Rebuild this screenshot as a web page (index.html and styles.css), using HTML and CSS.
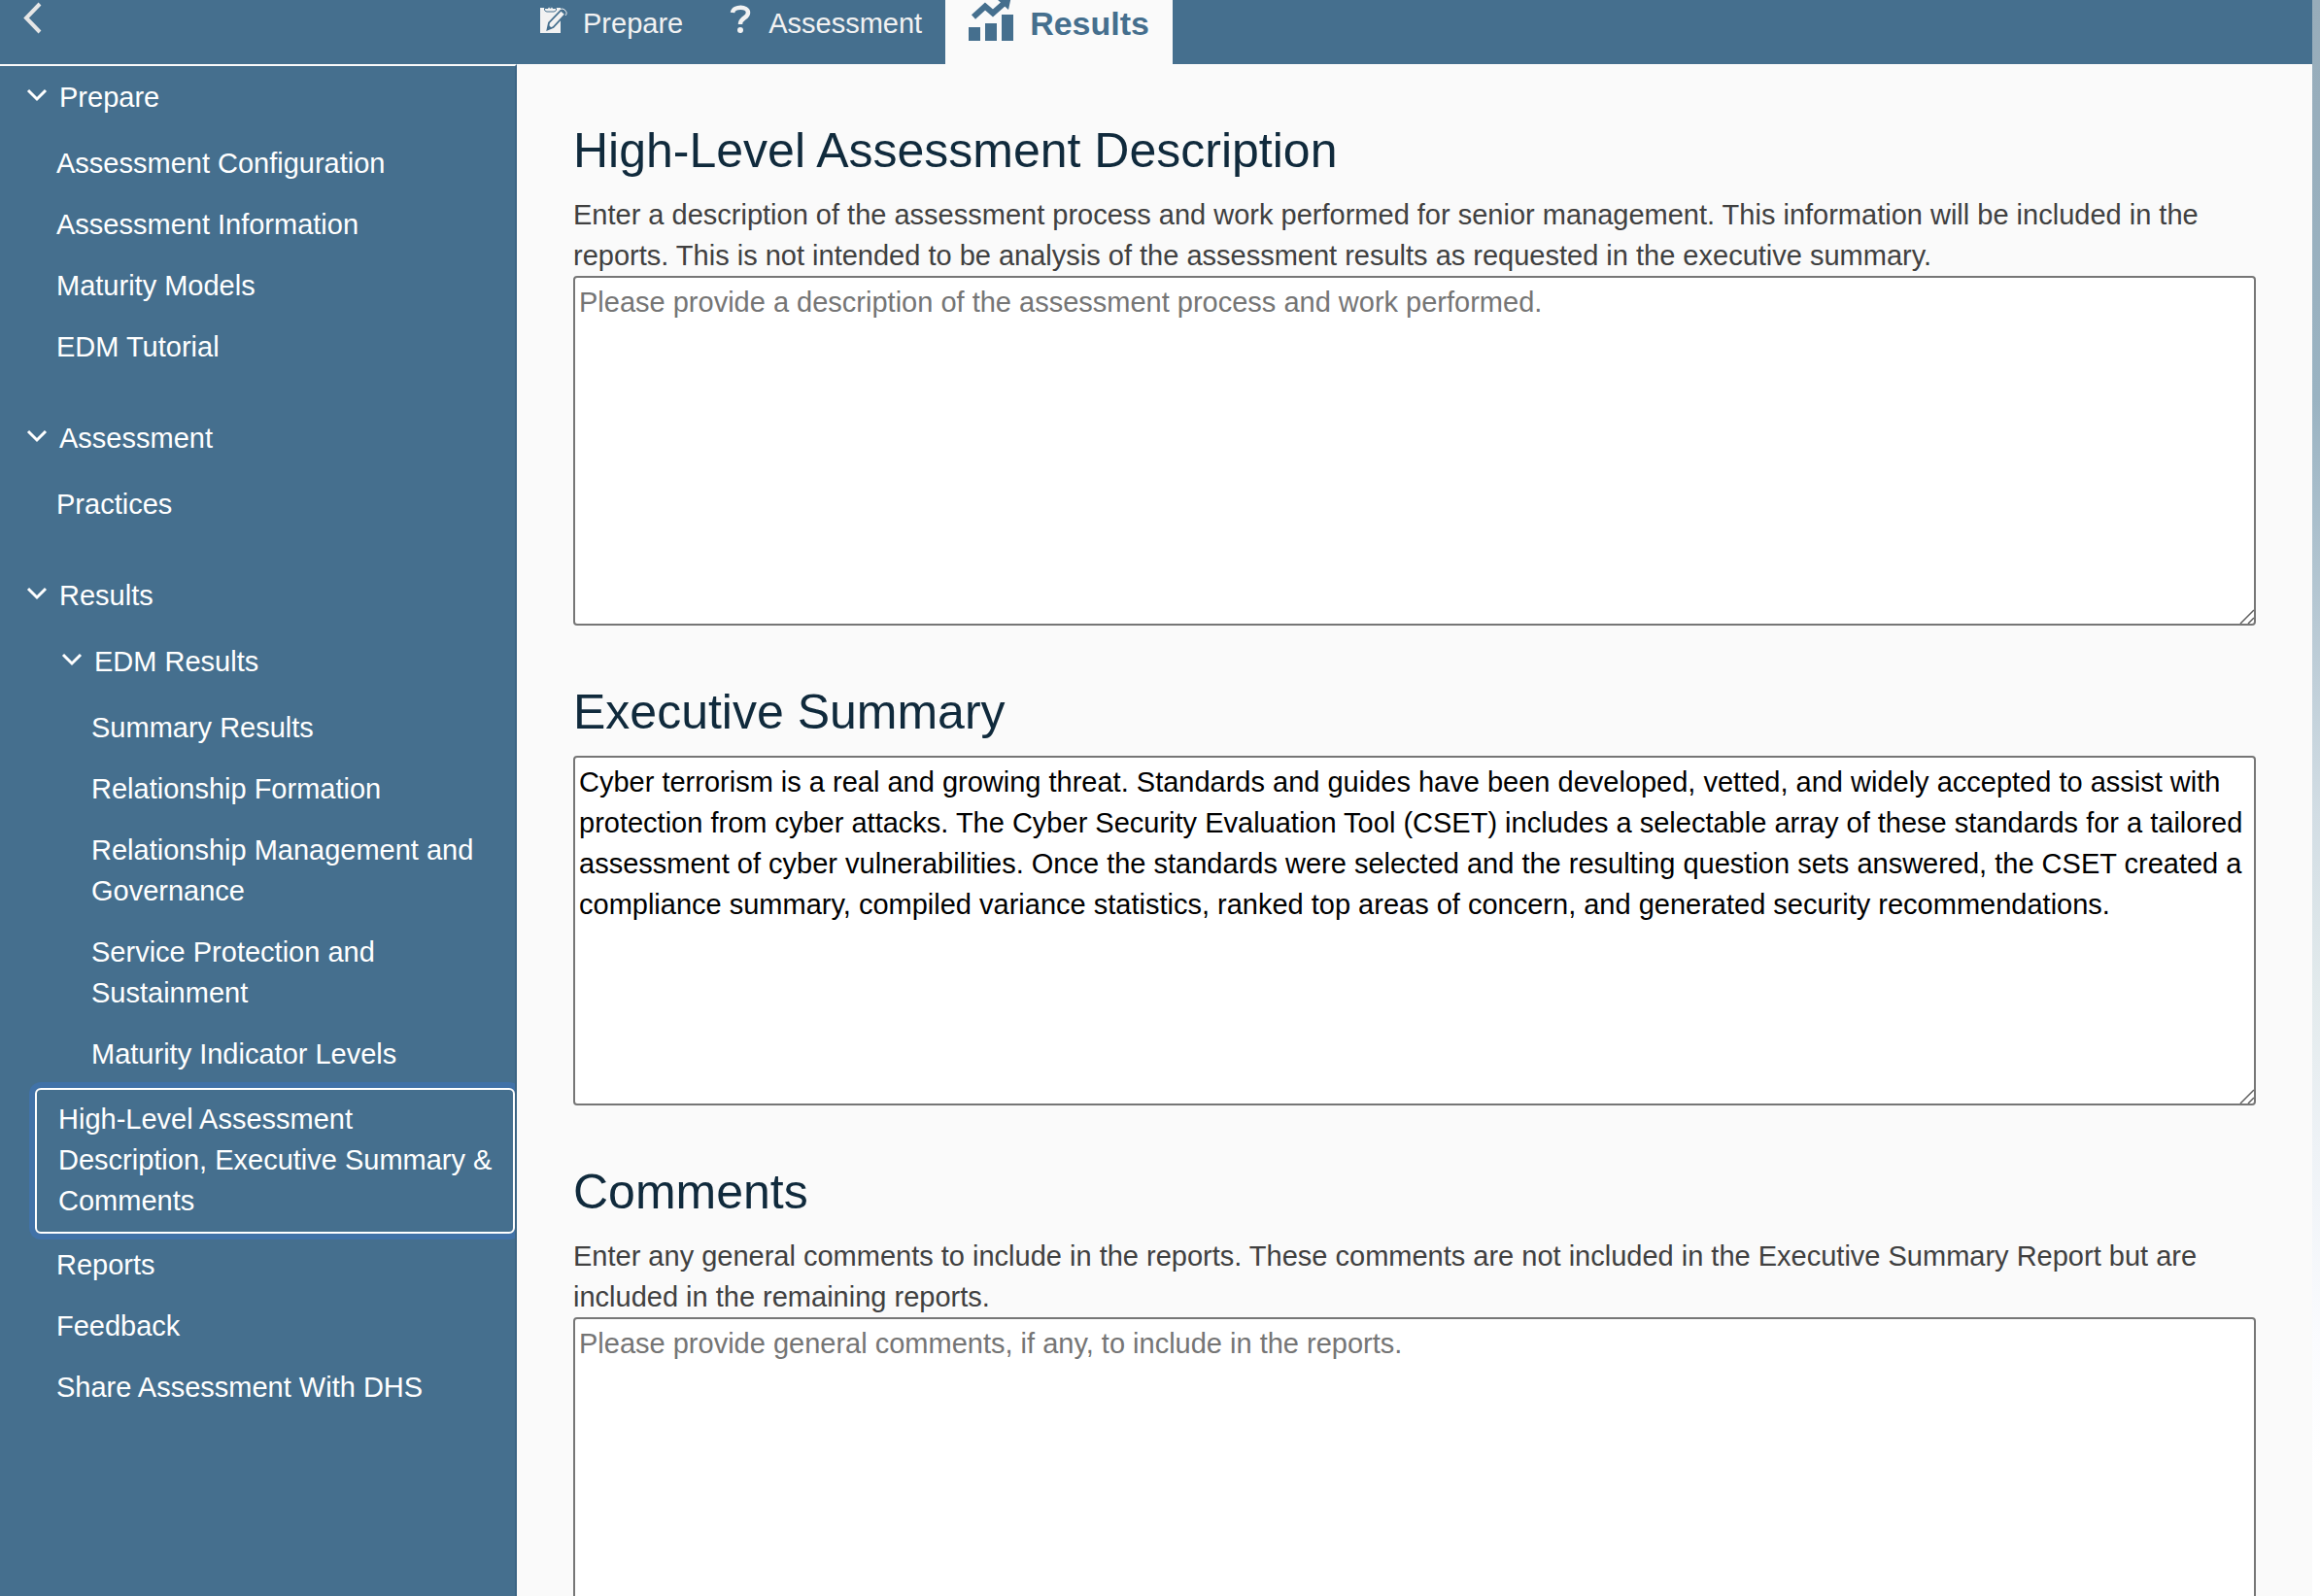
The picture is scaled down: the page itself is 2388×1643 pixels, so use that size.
FILE: index.html
```html
<!DOCTYPE html>
<html lang="en">
<head>
<meta charset="utf-8">
<title>High-Level Assessment Description, Executive Summary &amp; Comments</title>
<link rel="stylesheet" href="styles.css">
</head>
<body>
<div class="app">
  <header class="topbar">
    <div class="topbar-side">
      <button class="back" type="button" aria-label="Collapse menu">
        <svg width="20" height="36" viewBox="0 0 20 36" fill="none" stroke="currentColor" stroke-width="4"><path d="M17 4 3 18.500 17 33"/></svg>
      </button>
    </div>
    <nav class="tabs" aria-label="Assessment phases">
      <a class="tab" href="#prepare">
        <svg class="tab-icon" width="28" height="30" viewBox="0 0 28 30">
          <path fill="currentColor" d="M0 3h21v26H0z"/>
          <path fill="currentColor" stroke="#456f8e" d="M4.500 3.500H8a2.700 2.700 0 0 1 5 0h3.500V5q-.5 2-2.500 2H7q-2 0-2.500-2z"/>
          <circle cx="10.500" cy="2.800" r="1" fill="#456f8e"/>
          <path fill="currentColor" stroke="#456f8e" stroke-width="1.800" d="M7.500 25.500 9 18.500 21.500 5.500l4.500 4L13.500 23z"/>
          <path fill="#456f8e" d="m7.500 25.500 1-5 3.500 3.500z"/>
          <path fill="none" stroke="currentColor" d="m21 4.500 1.500-.5q3 0 4.500 3.500v2L26 11"/>
        </svg>
        <span>Prepare</span>
      </a>
      <a class="tab" href="#assessment">
        <svg class="tab-icon" width="24" height="30" viewBox="0 0 24 30"><path fill="none" stroke="currentColor" stroke-width="4.500" d="M3 8c1-7 16-7 16 0 0 6-8 5-8 12"/><circle cx="11" cy="26" r="3" fill="currentColor"/></svg>
        <span>Assessment</span>
      </a>
      <a class="tab tab-active" href="#results" aria-current="page">
        <svg class="tab-icon" width="47" height="42" viewBox="0 0 47 42"><path fill="currentColor" d="M0 28h12v14H0zM17 24h12v18H17zM34 15h12v27H34zM29-1l15-3-3 14z"/><path fill="none" stroke="currentColor" stroke-width="6" d="M5 17.500 17 6.500l8 7L38 2"/></svg>
        <span>Results</span>
      </a>
    </nav>
  </header>
  <div class="body">
    <nav class="sidebar" aria-label="Assessment sections">
      <section class="group">
        <button class="toggle" type="button" aria-expanded="true"><svg class="chev" viewBox="0 0 22 14"><path d="m2 2 9 9 9-9"/></svg>Prepare</button>
        <a class="item" href="#c">Assessment Configuration</a>
        <a class="item" href="#i">Assessment Information</a>
        <a class="item" href="#m">Maturity Models</a>
        <a class="item" href="#t">EDM Tutorial</a>
      </section>
      <section class="group">
        <button class="toggle" type="button" aria-expanded="true"><svg class="chev" viewBox="0 0 22 14"><path d="m2 2 9 9 9-9"/></svg>Assessment</button>
        <a class="item" href="#p">Practices</a>
      </section>
      <section class="group">
        <button class="toggle" type="button" aria-expanded="true"><svg class="chev" viewBox="0 0 22 14"><path d="m2 2 9 9 9-9"/></svg>Results</button>
        <div class="subgroup">
          <button class="toggle" type="button" aria-expanded="true"><svg class="chev" viewBox="0 0 22 14"><path d="m2 2 9 9 9-9"/></svg>EDM Results</button>
          <a class="item" href="#s">Summary Results</a>
          <a class="item" href="#rf">Relationship Formation</a>
          <a class="item" href="#rm">Relationship Management and Governance</a>
          <a class="item" href="#sp">Service Protection and Sustainment</a>
          <a class="item" href="#mil">Maturity Indicator Levels</a>
        </div>
        <a class="item item-current" href="#summary" aria-current="page">High-Level Assessment Description, Executive Summary &amp; Comments</a>
        <a class="item" href="#r">Reports</a>
        <a class="item" href="#f">Feedback</a>
        <a class="item" href="#d">Share Assessment With DHS</a>
      </section>
    </nav>
    <main class="content">
      <section class="field">
        <h2><label for="description">High-Level Assessment Description</label></h2>
        <p>Enter a description of the assessment process and work performed for senior management. This information will be included in the reports. This is not intended to be analysis of the assessment results as requested in the executive summary.</p>
        <textarea id="description" placeholder="Please provide a description of the assessment process and work performed."></textarea>
      </section>
      <section class="field">
        <h2><label for="executive">Executive Summary</label></h2>
        <textarea id="executive">Cyber terrorism is a real and growing threat. Standards and guides have been developed, vetted, and widely accepted to assist with protection from cyber attacks. The Cyber Security Evaluation Tool (CSET) includes a selectable array of these standards for a tailored assessment of cyber vulnerabilities. Once the standards were selected and the resulting question sets answered, the CSET created a compliance summary, compiled variance statistics, ranked top areas of concern, and generated security recommendations.</textarea>
      </section>
      <section class="field">
        <h2><label for="comments">Comments</label></h2>
        <p>Enter any general comments to include in the reports. These comments are not included in the Executive Summary Report but are included in the remaining reports.</p>
        <textarea id="comments" placeholder="Please provide general comments, if any, to include in the reports."></textarea>
      </section>
    </main>
  </div>
</div>
</body>
</html>
```
FILE: styles.css
```css
* { box-sizing: border-box; }
html { height: 100%; }
body {
  margin: 0;
  height: 100%;
  overflow: hidden;
  padding-right: 8px;
  font: 29px/42px "Liberation Sans", Arial, Helvetica, sans-serif;
  color: #404040;
  background: linear-gradient(#97acba, #9ab3c2 25%, #b8c9d4 39%, #d2dde4 51%, #e2eaec 62%, #eef2f6 72%, #fafbfe 84%, #fff 92%);
}
a { color: inherit; text-decoration: none; }
button { font: inherit; color: inherit; background: none; border: 0; cursor: pointer; }

.app { display: flex; flex-direction: column; height: 100%; background: #fafafa; }

.topbar { display: flex; height: 66px; flex: none; background: #456f8e; color: #f2f2f2; }
.topbar-side { width: 532px; flex: none; }
.back { display: block; padding: 0 24px; line-height: 0; color: #e6e6e6; }
.tabs { display: flex; }
.tab { display: flex; align-items: flex-start; gap: 16px; padding: 3px 24px 0; }
.tab-icon { margin-top: 2px; flex: none; }
.tab-active { background: #fafafa; color: #456f8e; font-size: 34px; font-weight: bold; }
.tab-active .tab-icon { margin-top: -3px; }

.body { display: flex; flex: 1; min-height: 0; }
.sidebar {
  width: 532px;
  flex: none;
  overflow: hidden;
  border-top: 2px solid #fafafa;
  border-right: 2px solid #3b6484;
  background: #456f8e;
  color: #fff;
}
.group { margin-bottom: 30px; padding-left: 36px; }
.subgroup { padding-left: 36px; }
.toggle { display: flex; align-items: flex-start; gap: 12px; margin-left: -9px; padding: 11px 0 16px; text-align: left; }
.subgroup .toggle { padding-top: 10px; }
.chev { width: 22px; height: 14px; margin-top: 12px; fill: none; stroke: currentColor; stroke-width: 3; }
.item { display: block; padding: 10px 16px 11px 22px; }
.item-current {
  margin: 3px 0 1px;
  padding-top: 9px;
  border: 2px solid #fff;
  border-radius: 6px;
  box-shadow: 0 0 0 6px #4172a8;
}

.content { flex: 1; min-width: 0; overflow: hidden; padding: 50px 58px 0; }
.field { margin-bottom: 50px; }
h2 { margin: 0; padding-bottom: 6px; font-size: 50px; line-height: 78px; font-weight: normal; color: #102a3c; }
p { margin: 0; }
textarea {
  display: block;
  width: 100%;
  height: 360px;
  padding: 4px;
  border: 2px solid #767676;
  border-radius: 4px;
  font: inherit;
  color: #000;
  background: #fff;
  resize: vertical;
}
textarea::placeholder { color: #757575; }
textarea::-webkit-scrollbar { width: 18px; height: 18px; }
textarea::-webkit-resizer {
  background: url("data:image/svg+xml,%3Csvg xmlns='http://www.w3.org/2000/svg' width='18' height='18' fill='none' stroke='%23606060' stroke-width='1.500'%3E%3Cpath d='M1 15 15 1M9 15l6-6'/%3E%3C/svg%3E") no-repeat;
}
```
